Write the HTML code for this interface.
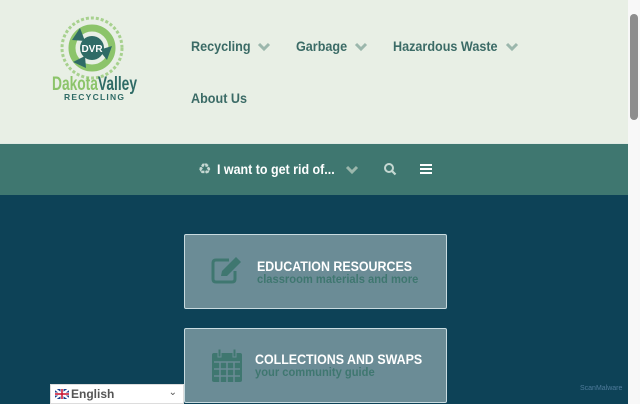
<!DOCTYPE html>
<html><head><meta charset="utf-8"><style>
*{margin:0;padding:0;box-sizing:border-box}
body{width:640px;height:404px;overflow:hidden;background:#0d4257;font-family:"Liberation Sans",sans-serif;position:relative}
.hdr{position:absolute;left:0;top:0;width:628px;height:143px;background:#e8efe5}
.bar{position:absolute;left:0;top:143px;width:628px;height:52px;background:#3f7770;border-top:1px solid #dfe9e3}
.nav{position:absolute;font-weight:bold;font-size:14px;color:#3b6b66;transform:scaleX(.9);transform-origin:left;white-space:nowrap}
.chev{position:absolute;width:14px;height:10px}
.sb{position:absolute;left:628px;top:0;width:12px;height:404px;background:#f8f8f8}
.thumb{position:absolute;left:630px;top:14px;width:8px;height:106px;background:#8d8d8d;border-radius:4px}
.card{position:absolute;left:184px;width:263px;height:75px;background:#6b8c96;border:1px solid #c8dbe0;border-radius:2px}
.card .t{position:absolute;color:#fff;font-weight:bold;font-size:13.5px;transform:scaleX(.92);transform-origin:left;white-space:nowrap}
.card .s{position:absolute;color:#3f7770;font-weight:bold;font-size:12px;transform:scaleX(.93);transform-origin:left;white-space:nowrap}
</style></head><body>
<div class="hdr"></div>
<svg style="position:absolute;left:48px;top:16px" width="96" height="90" viewBox="0 0 96 90">
<circle cx="44" cy="32" r="30" fill="none" stroke="#8cc46a" stroke-width="3" stroke-dasharray="3 2" opacity=".7"/>
<circle cx="44" cy="32" r="20" fill="none" stroke="#8cc46a" stroke-width="7"/>
<path d="M24 24 L32 12 L37 25 Z M64 30 L59 44 L51 34 Z M38 52 L25 46 L37 40Z" fill="#2f6b66"/>
<circle cx="44" cy="32" r="12" fill="#2f6b66"/>
<text x="44" y="36" text-anchor="middle" font-size="10" font-weight="bold" fill="#fff" font-family="Liberation Sans">DVR</text>
<text x="4" y="74" font-size="19" font-weight="bold" fill="#8cc46a" font-family="Liberation Sans" textLength="85" lengthAdjust="spacingAndGlyphs">Dakota<tspan fill="#2f6b66">Valley</tspan></text>
<text x="46" y="84" text-anchor="middle" font-size="8.5" font-weight="bold" fill="#2f6b66" font-family="Liberation Sans" textLength="60" lengthAdjust="spacing">RECYCLING</text>
</svg>
<div class="nav" style="left:191px;top:38px">Recycling</div>
<div class="nav" style="left:296px;top:38px">Garbage</div>
<div class="nav" style="left:393px;top:38px">Hazardous Waste</div>
<div class="nav" style="left:191px;top:90px">About Us</div>
<svg class="chev" style="left:257px;top:42px" viewBox="0 0 14 10"><path d="M2 2 L7 7 L12 2" stroke="#9bb7ac" stroke-width="3" fill="none"/></svg>
<svg class="chev" style="left:354px;top:42px" viewBox="0 0 14 10"><path d="M2 2 L7 7 L12 2" stroke="#9bb7ac" stroke-width="3" fill="none"/></svg>
<svg class="chev" style="left:505px;top:42px" viewBox="0 0 14 10"><path d="M2 2 L7 7 L12 2" stroke="#9bb7ac" stroke-width="3" fill="none"/></svg>
<div class="bar"></div>
<div style="position:absolute;left:198px;top:160px;color:#c5d8d2;font-size:15px">♻</div>
<div style="position:absolute;left:217px;top:161px;color:#fff;font-weight:bold;font-size:14px;transform:scaleX(.89);transform-origin:left;white-space:nowrap">I want to get rid of...</div>
<svg class="chev" style="left:345px;top:165px" viewBox="0 0 14 10"><path d="M2 2 L7 7 L12 2" stroke="#9bb7ac" stroke-width="3" fill="none"/></svg>
<svg style="position:absolute;left:383px;top:162px" width="14" height="14" viewBox="0 0 14 14"><circle cx="6" cy="6" r="4" stroke="#c5d8d2" stroke-width="2" fill="none"/><path d="M9 9 L12.5 12.5" stroke="#c5d8d2" stroke-width="2.2"/></svg>
<svg style="position:absolute;left:420px;top:163px" width="12" height="12" viewBox="0 0 12 12"><path d="M0 2H12M0 6H12M0 10H12" stroke="#fff" stroke-width="2"/></svg>
<div class="card" style="top:234px">
<svg style="position:absolute;left:26px;top:21px" width="34" height="30" viewBox="0 0 34 30"><path d="M18 4H5Q2 4 2 7V23Q2 26 5 26H21Q24 26 24 23V15" stroke="#3f7770" stroke-width="3" fill="none"/><path d="M10 20 L11 15 L25 1 L30 6 L16 20 Z" fill="#3f7770"/></svg>
<div class="t" style="left:72px;top:24px">EDUCATION RESOURCES</div>
<div class="s" style="left:72px;top:37px">classroom materials and more</div>
</div>
<div class="card" style="top:328px">
<svg style="position:absolute;left:26px;top:20px" width="32" height="34" viewBox="0 0 32 34"><rect x="1" y="4" width="30" height="29" rx="2" fill="#3f7770"/><path d="M3 13H29M3 20H29M3 27H29M9 13V33M16 13V33M23 13V33" stroke="#6b8c96" stroke-width="1.5"/><rect x="7" y="0" width="3" height="8" fill="#3f7770" stroke="#6b8c96"/><rect x="22" y="0" width="3" height="8" fill="#3f7770" stroke="#6b8c96"/></svg>
<div class="t" style="left:70px;top:23px">COLLECTIONS AND SWAPS</div>
<div class="s" style="left:70px;top:36px">your community guide</div>
</div>
<div style="position:absolute;left:50px;top:384px;width:134px;height:20px;background:#fff;border:1px solid #ddd;font-size:12px;font-weight:bold;color:#555;padding:2px 0 0 20px">English<span style="position:absolute;right:6px;top:2px;font-weight:normal;font-size:10px">⌄</span>
<svg style="position:absolute;left:4px;top:4px" width="14" height="10" viewBox="0 0 14 10"><rect width="14" height="10" fill="#1b3f8c"/><path d="M0 0L14 10M14 0L0 10" stroke="#fff" stroke-width="2"/><path d="M7 0V10M0 5H14" stroke="#fff" stroke-width="3"/><path d="M7 0V10M0 5H14" stroke="#c8102e" stroke-width="1.5"/></svg></div>
<div style="position:absolute;left:580px;top:385px;font-size:7px;color:#4e7a9a">ScanMalware</div>
<div class="sb"></div><div class="thumb"></div>
</body></html>
